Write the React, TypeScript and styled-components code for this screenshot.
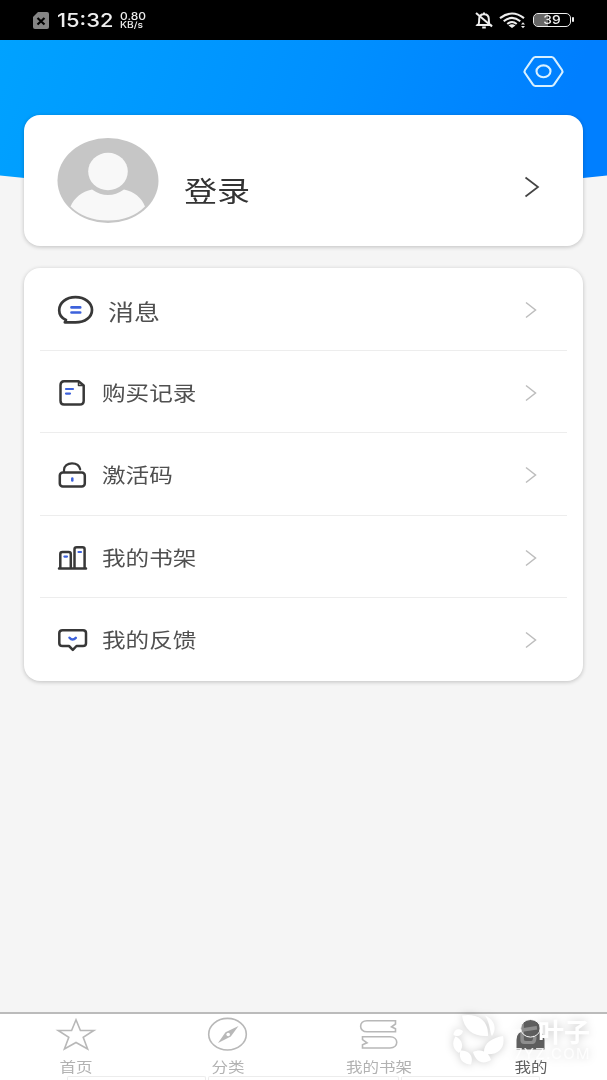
import React from "react";
import styled, { createGlobalStyle } from "styled-components";

const Global = createGlobalStyle`
  * { box-sizing: border-box; }
  body { margin: 0; background: #f5f5f5; font-family: "Noto Sans CJK SC", sans-serif; }
  svg { display: block; overflow: visible; flex: none; }
`;

const Screen = styled.div`
  width: 607px;
  height: 1080px;
  display: flex;
  flex-direction: column;
  overflow: hidden;
  background: #f5f5f5;
`;

const StatusBar = styled.header`
  height: 40px;
  flex: none;
  display: flex;
  align-items: center;
  justify-content: space-between;
  padding: 0 36px 0 33px;
  background: #000;
  color: #eee;
  font-family: Inter, sans-serif;
`;

const StatusGroup = styled.div`
  display: flex;
  align-items: center;
`;

const Clock = styled.span`
  width: 58px;
  margin: 2px 0 0 8px;
  font-size: 19px;
  font-weight: 500;
  line-height: 24px;
  transform: scaleX(1.15);
  transform-origin: left;
`;

const Speed = styled.div`
  margin: 1px 0 0 5px;
  font-size: 10px;
  font-weight: 500;
  line-height: 10px;
  transform: scaleX(1.2);
  transform-origin: left;
  small { display: block; font-size: 8.5px; line-height: 9px; }
`;

const Battery = styled.div`
  position: relative;
  width: 38px;
  height: 14px;
  margin-left: 7px;
  border: 1.5px solid #eee;
  border-radius: 5px;
  background: linear-gradient(90deg, #666 40%, #000 40%);
  background-clip: padding-box;
  font-size: 12px;
  font-weight: 500;
  line-height: 12px;
  text-align: center;
  span { display: block; transform: scaleX(1.15); }
  &::after {
    content: "";
    position: absolute;
    right: -4px;
    top: 3px;
    width: 2px;
    height: 5px;
    border-radius: 1px;
    background: #eee;
  }
`;

const Hero = styled.section`
  height: 140px;
  flex: none;
  background: linear-gradient(110deg, #00a2ff 0%, #0090ff 52%, #007fff 90%);
  display: flex;
  justify-content: flex-end;
  align-items: flex-start;
  padding: 16px 43px 0 0;
  clip-path: path("M0 0H607V135.5Q303 170 0 135.5Z");
`;

const Content = styled.main`
  position: relative;
  flex: 1;
  margin-top: -65px;
  padding: 0 24px;
  display: flex;
  flex-direction: column;
  gap: 22px;
`;

const Card = styled.section`
  background: #fff;
  border-radius: 16px;
  box-shadow: 0 1px 4px rgba(0, 0, 0, 0.22);
`;

const LoginCard = styled(Card)`
  height: 131px;
  display: flex;
  align-items: center;
  padding: 0 44px 0 33px;
`;

const Label = styled.span<{ $size: number; $color?: string; $center?: boolean }>`
  font-size: ${(p) => p.$size}px;
  line-height: 1.4;
  color: ${(p) => p.$color ?? "#505050"};
  white-space: nowrap;
  transform: scaleX(1.18);
  transform-origin: ${(p) => (p.$center ? "center" : "left")};
`;

const LoginLabel = styled(Label)`
  flex: 1;
  margin: 20px 0 0 25px;
`;

const TabLabel = styled(Label)`
  line-height: 14px;
`;

const Menu = styled(Card)`
  height: 413px;
  padding: 0 16px;
`;

const Row = styled.div`
  height: 82.5px;
  display: flex;
  align-items: center;
  padding: 3px 31px 0 18px;
  border-bottom: 1px solid #ededed;
  &:last-child { border-bottom: 0; padding-top: 2px; }
`;

const RowLabel = styled(Label)<{ $gap: number }>`
  flex: 1;
  margin-left: ${(p) => p.$gap}px;
`;

const TabBar = styled.nav`
  position: relative;
  height: 68px;
  flex: none;
  display: grid;
  grid-template-columns: repeat(4, 1fr);
  background: #fff;
  border-top: 2px solid #bbb;
`;

const Tab = styled.div`
  display: flex;
  flex-direction: column;
  align-items: center;
  padding-top: 4px;
  svg { margin-bottom: 7px; }
`;

const Watermark = styled.div`
  position: absolute;
  left: 452px;
  top: 0;
  display: flex;
  color: #fff;
  filter: drop-shadow(0 0 4px rgba(0, 0, 0, 0.2));
`;

const WatermarkText = styled.div`
  margin-left: 8px;
  font-size: 26px;
  font-weight: 700;
  line-height: 26px;
  white-space: nowrap;
  padding-top: 4px;
  small {
    display: block;
    font: 400 15px/12px Inter, sans-serif;
    letter-spacing: 1.3px;
    margin: 4px 0 0 2px;
    opacity: 0.85;
  }
`;

const Faded = styled.span`
  opacity: 0.3;
`;

const Hints = styled.div`
  position: absolute;
  left: 67px;
  bottom: 0;
  width: 473px;
  height: 4px;
  display: grid;
  grid-template-columns: 139px 191px 139px;
  gap: 2px;
  i { border: 1px solid #ececec; border-bottom: 0; border-radius: 2px 2px 0 0; }
`;

const Chevron = ({ strong }: { strong?: boolean }) =>
  strong ? (
    <svg width="14" height="20" viewBox="0 0 14 20" fill="none" stroke="#444" strokeWidth="1.7" style={{ marginTop: 12 }}>
      <path d="M.5.5 13 10 .5 19.5" />
    </svg>
  ) : (
    <svg width="10" height="16" viewBox="0 0 10 16" fill="none" stroke="#bdbdbd" strokeWidth="1.5">
      <path d="M0 0.5 9.5 8 0 15.5" />
    </svg>
  );

const icon = { fill: "none", stroke: "#383838", strokeWidth: 2.5, strokeLinejoin: "round" as const, strokeLinecap: "round" as const };

const MessageIcon = () => (
  <svg width="35" height="28" viewBox="0 0 35 28" {...icon}>
    <path d="M6.8 26.3 8 24C3.4 22 1.2 18.2 1.2 14.2 1.2 6.8 8.2 1.2 17.5 1.2S34 6.8 34 14 27 26.3 17.5 26.3Z" strokeWidth="2.7" />
    <path d="M13.5 11.4H22.2M13.5 16.5H22.2" stroke="#3d62dc" strokeWidth="2.7" />
  </svg>
);
const OrderIcon = () => (
  <svg width="28" height="26" viewBox="0 0 28 26" {...icon}>
    <path d="M6 1.3H20.5L25.7 5.5V20.8Q25.7 24.6 21.7 24.6H6Q2.5 24.6 2.5 20.8V5.1Q2.5 1.3 6 1.3Z" />
    <path d="M20.5 2V5.4H25" strokeWidth="1.5" />
    <path d="M8 9H15M8 13.6H12" stroke="#3d62dc" strokeWidth="2.2" />
  </svg>
);
const LockIcon = () => (
  <svg width="28" height="26" viewBox="0 0 28 26" {...icon}>
    <rect x="1.8" y="10.4" width="25" height="14" rx="3" />
    <path d="M6 10V8C6 4 9.5 1.3 14 1.3Q21 1.3 22.2 7.3" strokeWidth="2.2" />
    <path d="M14.3 16.4V18.6" stroke="#3d62dc" />
  </svg>
);
const BooksIcon = () => (
  <svg width="29" height="24" viewBox="0 0 29 24" {...icon}>
    <path d="M1 22.6H28M2.3 22.4V8Q2.3 6 4.5 6H10.7Q12.8 6 12.8 8V22.4M16.5 22.4V3.2Q16.5 1.2 18.7 1.2H24.5Q26.6 1.2 26.6 3.2V22.4" />
    <path d="M6.4 10.6H9M20.5 6H23" stroke="#3d62dc" strokeWidth="2.2" />
  </svg>
);
const FeedbackIcon = () => (
  <svg width="29" height="22" viewBox="0 0 29 22" {...icon}>
    <path d="M4.5 1.2H25Q28 1.2 28 4V14.2Q28 17 25 17H18.5L14.8 20.8 11 17H4.5Q1.3 17 1.3 14.2V4Q1.3 1.2 4.5 1.2Z" />
    <path d="M11.5 8.8Q14.5 12.3 17.8 8.8" stroke="#3d62dc" />
  </svg>
);

const MENU = [
  { text: "消息", size: 22, gap: 15, Icon: MessageIcon },
  { text: "购买记录", size: 20, gap: 15.5, Icon: OrderIcon },
  { text: "激活码", size: 20, gap: 15.5, Icon: LockIcon },
  { text: "我的书架", size: 20, gap: 14.5, Icon: BooksIcon },
  { text: "我的反馈", size: 20, gap: 14.5, Icon: FeedbackIcon },
];

const tabIcon = { width: 40, height: 34, viewBox: "0 0 40 34", fill: "none", stroke: "#b8b8b8", strokeWidth: 1.6 };

const StarIcon = () => (
  <svg {...tabIcon}>
    <path d="M20 1.8 24.4 12.5H37.8L27.2 19.3 31.6 31 20 24.5 8.4 31 12.8 19.3 2.2 12.5H15.6Z" />
  </svg>
);
const CompassIcon = () => (
  <svg {...tabIcon}>
    <ellipse cx="19.5" cy="16.2" rx="18.8" ry="15.8" />
    <path d="M30.5 8 22.8 18.4 10 25 17.5 14.2Z" fill="#b8b8b8" stroke="none" />
    <circle cx="20.2" cy="16.5" r="1.8" fill="#fff" stroke="none" />
  </svg>
);
const ShelfIcon = () => (
  <svg {...tabIcon}>
    <path d="M36.5 2.7H8C-.5 2.7-.5 13.8 8 13.8H36.5V10.8L32.5 8.8 36.5 6ZM3.5 18.7H31C40 18.7 40 30 31 30H3.5V26.7L8 24.8 3.5 21.7Z" />
  </svg>
);
const PersonIcon = () => (
  <svg {...tabIcon}>
    <path d="M5.5 31.5V22Q5.5 13 15 13H24Q33.5 13 33.5 22V31.5Z" fill="#606060" stroke="none" />
    <ellipse cx="19.5" cy="10.3" rx="9.8" ry="8.8" fill="#606060" stroke="#fff" strokeWidth="1" />
  </svg>
);

const TABS = [
  { text: "首页", Icon: StarIcon },
  { text: "分类", Icon: CompassIcon },
  { text: "我的书架", Icon: ShelfIcon },
  { text: "我的", Icon: PersonIcon, active: true },
];

export default function App() {
  return (
    <Screen>
      <Global />
      <StatusBar>
        <StatusGroup>
          <svg width="16" height="17" viewBox="0 0 16 17">
            <path d="M5 0H14Q16 0 16 2V15Q16 17 14 17H2Q0 17 0 15V5Z" fill="#858585" />
            <path d="M4.5 6 11.5 12.5M11.5 6 4.5 12.5" stroke="#000" strokeWidth="2.2" />
          </svg>
          <Clock>15:32</Clock>
          <Speed>0.80<small>KB/s</small></Speed>
        </StatusGroup>
        <StatusGroup>
          <svg width="18" height="17" viewBox="0 0 18 17" fill="none" stroke="#eee" strokeWidth="2">
            <path d="M3 13Q4.2 12 4.2 7Q4.2 2.2 9 2.2T13.8 7Q13.8 12 15 13ZM1.5 13H16.5M7.2 15.4H10.8M9 2V.5" />
            <path d="M1 1 17 14.5" />
          </svg>
          <svg width="27" height="17" viewBox="0 0 27 17" fill="none" stroke="#eee" strokeWidth="2.1" style={{ marginLeft: 6 }}>
            <path d="M1 6.2Q13 -3.2 25 6.2M4.7 9.2Q13 2.5 21.3 9.2M8.3 12Q13 8 17.7 12" />
            <path d="M9.5 13.5Q13 11 16.5 13.5L13 16Z" fill="#eee" stroke="none" />
            <path d="M24 10.2 26 12.5H22ZM24 16.3 26 14H22Z" fill="#eee" stroke="none" />
          </svg>
          <Battery><span>39</span></Battery>
        </StatusGroup>
      </StatusBar>

      <Hero>
        <svg width="41" height="32" viewBox="0 0 41 32" fill="none" stroke="#d8f0ff" strokeWidth="2.1" strokeLinejoin="round">
          <path d="M12.5 1H28.5Q30 1 31 2.3L39 14Q40 15.5 39 17L31 28.7Q30 30 28.5 30H12.5Q11 30 10 28.7L2 17Q1 15.5 2 14L10 2.3Q11 1 12.5 1Z" />
          <ellipse cx="20.5" cy="15.3" rx="7" ry="5.9" />
        </svg>
      </Hero>

      <Content>
        <LoginCard>
          <svg width="102" height="86" viewBox="0 0 102 86">
            <ellipse cx="51" cy="42.5" rx="50.5" ry="42.5" fill="#c6c6c6" />
            <ellipse cx="51" cy="33.5" rx="19.8" ry="18.8" fill="#f8f8f8" />
            <path d="M35 51.5Q51 62.5 67 51.5C77 53.5 85 60 88 68.5Q74 82.5 51 82.5T13.5 68.5C17 60 25 53.5 35 51.5Z" fill="#f8f8f8" />
          </svg>
          <LoginLabel $size={28} $color="#333">登录</LoginLabel>
          <Chevron strong />
        </LoginCard>
        <Menu>
          {MENU.map(({ text, size, gap, Icon }) => (
            <Row key={text}>
              <Icon />
              <RowLabel $size={size} $gap={gap}>{text}</RowLabel>
              <Chevron />
            </Row>
          ))}
        </Menu>
      </Content>

      <TabBar>
        {TABS.map(({ text, Icon, active }) => (
          <Tab key={text}>
            <Icon />
            <TabLabel $size={14} $center $color={active ? "#606060" : "#b2b2b2"}>{text}</TabLabel>
          </Tab>
        ))}
        <Hints><i /><i /><i /></Hints>
        <Watermark>
          <svg width="52" height="50" viewBox="0 0 52 50" fill="#fff">
            <path d="M10 1.5C24-1 37 5 36 22C22 23 12 16 10 1.5ZM33 1.5C41 5 46 13 40 22C38 20 38 8 33 1.5ZM51 22C54 35 45 42 32 40C31 29 40 24 51 22ZM21 38C29 34 37 38 39 46C31 51 24 48 21 38ZM8.5 36.5C17 36 22 42 19 50.5C11 50 6 45 8.5 36.5ZM3.5 22.5C11 26 12 33 7 39C0 35 0 28 3.5 22.5ZM1.5 21C2 15 7 14 11 17C10 22 5 23 1.5 21Z" />
          </svg>
          <WatermarkText><Faded>七</Faded>叶子<small>7YZ.COM</small></WatermarkText>
        </Watermark>
      </TabBar>
    </Screen>
  );
}
